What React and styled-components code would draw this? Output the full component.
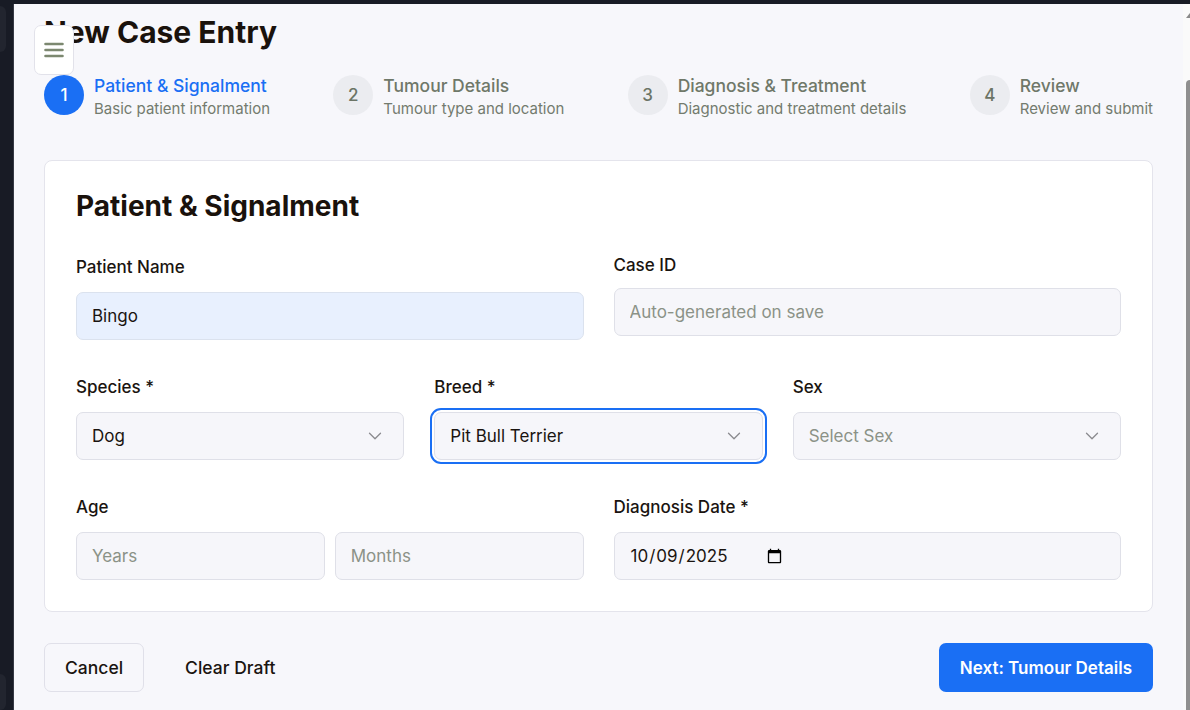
import styled, { createGlobalStyle, css } from 'styled-components';
import { ChevronDown } from 'lucide-react';

const GlobalStyle = createGlobalStyle`
    html, body {
        margin: 0;
        padding: 0;
        overflow: hidden;
        background: #181b25;
        font-family: Inter, "Noto Sans", "Liberation Sans", sans-serif;
        color: #1a1714;
    }
    * {
        box-sizing: border-box;
    }
`;

const Shell = styled.div`
    display: flex;
    height: 100vh;
    padding-top: 4px;
    background: #181b25;
`;

const Sidebar = styled.aside`
    flex: none;
    width: 14px;
    display: flex;
    flex-direction: column;
    justify-content: space-between;
    padding: 2px 0 0;
    border-right: 1px solid #363944;
    background: #181b25;
`;

const SideItem = styled.div`
    width: 6px;
    height: ${(p) => p.$h}px;
    border-radius: 0 6px 6px 0;
    background: #22252f;
`;

const Main = styled.main`
    flex: 1;
    overflow: hidden;
    background: #f7f7fb;
`;

const ScrollTrack = styled.div`
    flex: none;
    width: 7px;
    display: flex;
    flex-direction: column;
    align-items: flex-end;
    background: #fafafa;
`;

const ScrollArrow = styled.div`
    width: 0;
    height: 0;
    margin: 9px 0 0;
    border-left: 4px solid transparent;
    border-bottom: 5px solid #8a8a8a;
`;

const ScrollThumb = styled.div`
    flex: 1;
    width: 4px;
    margin-top: 62px;
    border-radius: 4px 0 0 0;
    background: #8f8f8f;
`;

const Content = styled.div`
    padding: 10px 30px 0;
`;

const MenuButton = styled.button`
    position: fixed;
    left: 34px;
    top: 25px;
    width: 40px;
    height: 50px;
    display: flex;
    align-items: center;
    justify-content: center;
    padding: 0;
    background: #ffffff;
    border: 1px solid #e2e2ea;
    border-radius: 7px;
    cursor: pointer;
`;

const PageTitle = styled.h1`
    margin: 0;
    font-size: 30px;
    line-height: 36px;
    font-weight: 700;
    color: #1a120c;
`;

const Steps = styled.ol`
    display: flex;
    justify-content: space-between;
    margin: 24px 0 0;
    padding: 0;
    list-style: none;
`;

const Step = styled.li`
    display: flex;
    align-items: flex-start;
    gap: 10px;
`;

const StepNumber = styled.span`
    flex: none;
    width: 40px;
    height: 40px;
    margin-top: 1px;
    display: flex;
    align-items: center;
    justify-content: center;
    border-radius: 50%;
    font-size: 17px;
    font-weight: 500;
    background: ${(p) => (p.$active ? '#1a6ff4' : '#ebecf0')};
    color: ${(p) => (p.$active ? '#ffffff' : '#6b7466')};
`;

const StepText = styled.div`
    display: flex;
    flex-direction: column;
`;

const StepTitle = styled.span`
    font-size: 17.5px;
    line-height: 24px;
    font-weight: 500;
    color: ${(p) => (p.$active ? '#1a6ff4' : '#6f7869')};
`;

const StepDesc = styled.span`
    font-size: 15px;
    line-height: 22px;
    color: #737b6e;
`;

const Card = styled.section`
    margin-top: 40px;
    padding: 28px 31px 31px;
    background: #ffffff;
    border: 1px solid #e4e4ec;
    border-radius: 8px;
`;

const CardTitle = styled.h2`
    margin: 0 0 30px;
    font-size: 28px;
    line-height: 34px;
    font-weight: 700;
    color: #1a120c;
`;

const Rows = styled.div`
    display: flex;
    flex-direction: column;
    gap: 35px;
`;

const Row = styled.div`
    display: grid;
    grid-template-columns: repeat(${(p) => p.$cols}, 1fr);
    column-gap: 30px;
    align-items: start;
`;

const Field = styled.div`
    display: flex;
    flex-direction: column;
`;

const Label = styled.label`
    display: block;
    margin: ${(p) => p.$shift || 0}px 0 ${(p) => p.$gap || 13}px;
    font-size: 17px;
    line-height: 24px;
    font-weight: 500;
    color: #1a1410;
`;

const controlBase = css`
    width: 100%;
    height: 48px;
    padding: 0 15px;
    border: 1px solid #dfe0e8;
    border-radius: 7px;
    background: #f6f6fa;
    font-family: inherit;
    font-size: 17px;
    color: #1a1410;
    outline: none;

    &::placeholder {
        color: #8b9287;
    }
`;

const Input = styled.input`
    ${controlBase}
    ${(p) =>
        p.$filled &&
        css`
            background: #e8f0fe;
            border-color: #dbe2ee;
        `}
`;

const DateInput = styled.input`
    ${controlBase}
    display: flex;
    justify-content: flex-start;

    &::-webkit-datetime-edit {
        flex: 0 0 auto;
    }
    &::-webkit-calendar-picker-indicator {
        margin-left: 3px;
    }
`;

const Pair = styled.div`
    display: grid;
    grid-template-columns: 1fr 1fr;
    gap: 10px;
`;

const SelectWrap = styled.div`
    position: relative;
    border-radius: 7px;
    ${(p) =>
        p.$focused &&
        css`
            outline: 2px solid #1a6ff4;
            outline-offset: 2px;
        `}
`;

const Select = styled.select`
    ${controlBase}
    appearance: none;
    padding-right: 40px;
    color: ${(p) => (p.$empty ? '#8b9287' : '#1a1410')};
`;

const Chevron = styled(ChevronDown)`
    position: absolute;
    right: 18px;
    top: 50%;
    transform: translateY(-50%);
    color: #8a8a8e;
    pointer-events: none;
`;

const Footer = styled.div`
    display: flex;
    align-items: center;
    gap: 20px;
    margin-top: 31px;
`;

const Button = styled.button`
    height: 49px;
    padding: 0 20px;
    border-radius: 7px;
    font-family: inherit;
    font-size: 17.5px;
    font-weight: 500;
    cursor: pointer;
    border: 1px solid ${(p) => (p.$variant === 'outline' ? '#e0e0e9' : 'transparent')};
    background: ${(p) => (p.$variant === 'primary' ? '#1a6ff4' : 'transparent')};
    color: ${(p) => (p.$variant === 'primary' ? '#ffffff' : '#1a1410')};
    ${(p) => p.$variant === 'primary' && css`
        margin-left: auto;
        font-size: 17px;
        font-weight: 600;
    `}
`;

const steps = [
    { title: 'Patient & Signalment', desc: 'Basic patient information' },
    { title: 'Tumour Details', desc: 'Tumour type and location' },
    { title: 'Diagnosis & Treatment', desc: 'Diagnostic and treatment details' },
    { title: 'Review', desc: 'Review and submit' },
];

const MenuIcon = () => (
    <svg width="20" height="16" viewBox="0 0 20 16" fill="none">
        <path d="M1.5 2h17M1.5 8h17M1.5 14h17" stroke="#7c8870" strokeWidth="2.6" strokeLinecap="round" />
    </svg>
);

const SelectField = ({ id, value, placeholder, options, focused }) => (
    <SelectWrap $focused={focused}>
        <Select id={id} defaultValue={value || ''} $empty={!value}>
            {placeholder && <option value="">{placeholder}</option>}
            {options.map((o) => (
                <option key={o} value={o}>{o}</option>
            ))}
        </Select>
        <Chevron size={22} strokeWidth={1.4} />
    </SelectWrap>
);

export default function App() {
    return (
        <>
            <GlobalStyle />
            <Shell>
                <Sidebar>
                    <SideItem $h={46} />
                    <SideItem $h={36} />
                </Sidebar>
                <Main>
                    <Content>
                        <PageTitle>New Case Entry</PageTitle>
                        <Steps>
                            {steps.map((s, i) => (
                                <Step key={s.title}>
                                    <StepNumber $active={i === 0}>{i + 1}</StepNumber>
                                    <StepText>
                                        <StepTitle $active={i === 0}>{s.title}</StepTitle>
                                        <StepDesc>{s.desc}</StepDesc>
                                    </StepText>
                                </Step>
                            ))}
                        </Steps>

                        <Card>
                            <CardTitle>Patient & Signalment</CardTitle>
                            <Rows>
                                <Row $cols={2}>
                                    <Field>
                                        <Label htmlFor="name" $shift={2}>Patient Name</Label>
                                        <Input id="name" defaultValue="Bingo" $filled />
                                    </Field>
                                    <Field>
                                        <Label htmlFor="caseid" $gap={11}>Case ID</Label>
                                        <Input id="caseid" placeholder="Auto-generated on save" readOnly />
                                    </Field>
                                </Row>
                                <Row $cols={3}>
                                    <Field>
                                        <Label htmlFor="species">Species *</Label>
                                        <SelectField id="species" value="Dog" options={['Dog', 'Cat']} />
                                    </Field>
                                    <Field>
                                        <Label htmlFor="breed">Breed *</Label>
                                        <SelectField
                                            id="breed"
                                            value="Pit Bull Terrier"
                                            options={['Pit Bull Terrier', 'Labrador Retriever', 'Boxer']}
                                            focused
                                        />
                                    </Field>
                                    <Field>
                                        <Label htmlFor="sex">Sex</Label>
                                        <SelectField
                                            id="sex"
                                            placeholder="Select Sex"
                                            options={['Male', 'Female', 'Male Neutered', 'Female Spayed']}
                                        />
                                    </Field>
                                </Row>
                                <Row $cols={2}>
                                    <Field>
                                        <Label htmlFor="years">Age</Label>
                                        <Pair>
                                            <Input id="years" placeholder="Years" />
                                            <Input id="months" placeholder="Months" />
                                        </Pair>
                                    </Field>
                                    <Field>
                                        <Label htmlFor="date">Diagnosis Date *</Label>
                                        <DateInput id="date" type="date" defaultValue="2025-10-09" />
                                    </Field>
                                </Row>
                            </Rows>
                        </Card>

                        <Footer>
                            <Button $variant="outline">Cancel</Button>
                            <Button>Clear Draft</Button>
                            <Button $variant="primary">Next: Tumour Details</Button>
                        </Footer>
                    </Content>
                </Main>
                <ScrollTrack aria-hidden="true">
                    <ScrollArrow />
                    <ScrollThumb />
                </ScrollTrack>
            </Shell>
            <MenuButton aria-label="Open menu">
                <MenuIcon />
            </MenuButton>
        </>
    );
}
